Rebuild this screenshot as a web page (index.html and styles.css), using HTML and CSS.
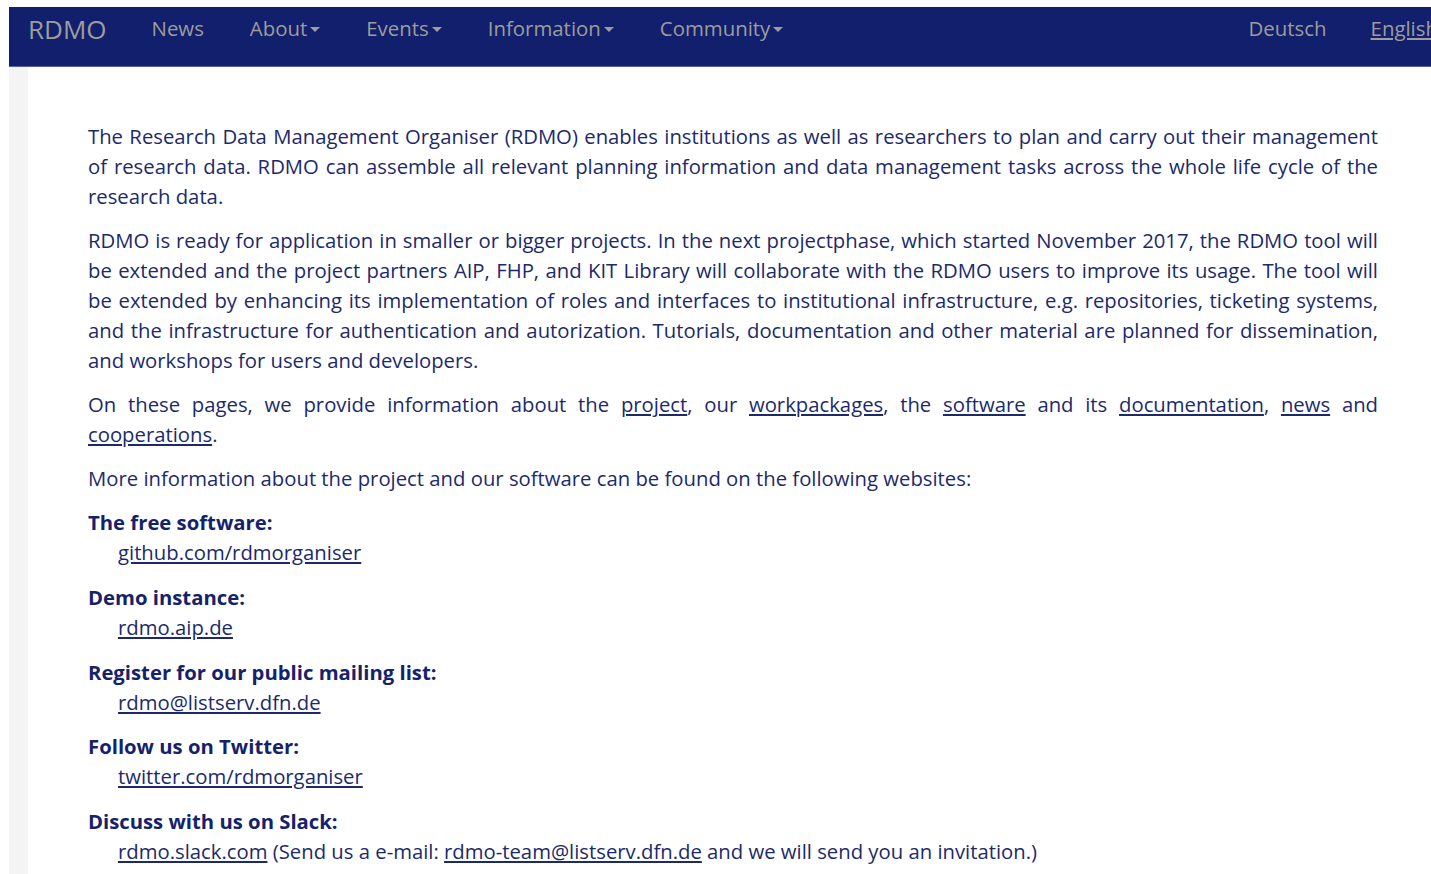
FILE: index.html
```html
<!DOCTYPE html>
<html lang="en">
<head>
<meta charset="utf-8">
<title>RDMO – Research Data Management Organiser</title>
<link rel="stylesheet" href="styles.css">
</head>
<body>
<nav class="navbar">
  <a class="brand" href="#">RDMO</a>
  <ul class="nav">
    <li><a href="#">News</a></li>
    <li><a href="#">About<span class="caret"></span></a></li>
    <li><a href="#">Events<span class="caret"></span></a></li>
    <li><a href="#">Information<span class="caret"></span></a></li>
    <li><a href="#">Community<span class="caret"></span></a></li>
  </ul>
  <ul class="nav nav-right">
    <li><a href="#">Deutsch</a></li>
    <li><a class="active" href="#">English</a></li>
  </ul>
</nav>

<div class="page">
  <main class="content">
    <p>The Research Data Management Organiser (RDMO) enables institutions as well as researchers to plan and carry out their management of research data. RDMO can assemble all relevant planning information and data management tasks across the whole life cycle of the research data.</p>
    <p>RDMO is ready for application in smaller or bigger projects. In the next projectphase, which started November 2017, the RDMO tool will be extended and the project partners AIP, FHP, and KIT Library will collaborate with the RDMO users to improve its usage. The tool will be extended by enhancing its implementation of roles and interfaces to institutional infrastructure, e.g. repositories, ticketing systems, and the infrastructure for authentication and autorization. Tutorials, documentation and other material are planned for dissemination, and workshops for users and developers.</p>
    <p>On these pages, we provide information about the <a href="#">project</a>, our <a href="#">workpackages</a>, the <a href="#">software</a> and its <a href="#">documentation</a>, <a href="#">news</a> and <a href="#">cooperations</a>.</p>
    <p class="plain">More information about the project and our software can be found on the following websites:</p>
    <dl class="links">
      <dt>The free software:</dt>
      <dd><a href="#">github.com/rdmorganiser</a></dd>
      <dt>Demo instance:</dt>
      <dd><a href="#">rdmo.aip.de</a></dd>
      <dt>Register for our public mailing list:</dt>
      <dd><a href="#">rdmo@listserv.dfn.de</a></dd>
      <dt>Follow us on Twitter:</dt>
      <dd><a href="#">twitter.com/rdmorganiser</a></dd>
      <dt>Discuss with us on Slack:</dt>
      <dd><a href="#">rdmo.slack.com</a> (Send us a e-mail: <a href="#">rdmo-team@listserv.dfn.de</a> and we will send you an invitation.)</dd>
    </dl>
  </main>
</div>
</body>
</html>
```

FILE: styles.css
```css
html {
  overflow-x: hidden;
}

body {
  margin: 7px 0 0 9px;
  font-family: "Open Sans", "Noto Sans", sans-serif;
  color: #1c2a6b;
  background: #fff;
}

/* top navigation bar */
.navbar {
  display: flex;
  align-items: flex-start;
  height: 59px;
  background: #111f6c;
  border-bottom: 1px solid #56609c;
  margin-right: -29px;
}

.brand {
  padding: 4px 22px 0 19px;
  font-size: 26px;
  line-height: 36px;
  color: #9d9d9d;
  text-decoration: none;
}

.nav {
  display: flex;
  list-style: none;
  margin: 0;
  padding: 0;
}

.nav a {
  display: block;
  padding: 6px 23px 0;
  font-size: 20.4px;
  line-height: 30px;
  color: #9d9d9d;
  text-decoration: none;
}

.nav-right a {
  padding: 6px 22px 0;
}

.nav a.active {
  text-decoration: underline;
}

.nav-right {
  margin-left: auto;
}

.caret {
  display: inline-block;
  width: 0;
  height: 0;
  margin-left: 3px;
  vertical-align: middle;
  border-top: 5px solid #9d9d9d;
  border-left: 5px solid transparent;
  border-right: 5px solid transparent;
  position: relative;
  top: -1px;
}

/* page body */
.page {
  background: #f4f4f4;
  padding-left: 19px;
}

.content {
  background: #fff;
  padding: 54px 53px 20px 60px;
  font-size: 20.3px;
  line-height: 30px;
}

.content p {
  margin: 0 0 14px;
  text-align: justify;
}

.content p.plain {
  text-align: left;
}

.content a {
  color: #1c2a6b;
  text-decoration: underline;
}

.links {
  margin: 0;
}

.links dt {
  font-weight: 700;
  color: #15226b;
}

.links dd {
  margin: 0 0 14.75px 30px;
}
```
